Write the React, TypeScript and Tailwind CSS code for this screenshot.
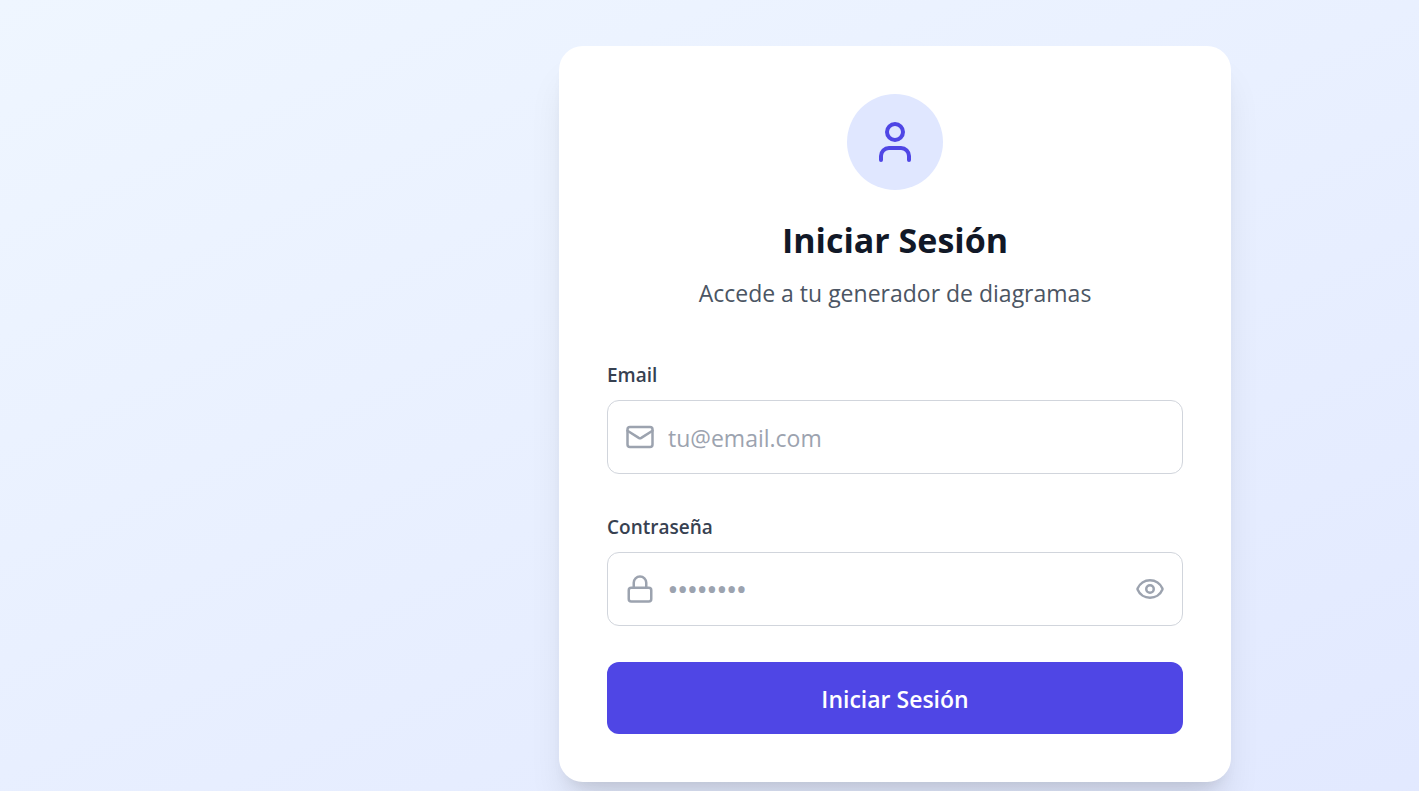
import { useState, type FormEvent } from "react";
import { Eye, EyeOff, Lock, Mail, User } from "lucide-react";

const inputClass =
  "h-[74px] w-full rounded-xl border border-gray-300 bg-white pl-[60px] pt-0.5 text-[23px] leading-9 text-[#111827] outline-none placeholder:text-[#9ca3af] focus:border-[#6366f1]";
const labelClass = "mb-2 block text-[19px] font-semibold leading-[34px] text-[#374151]";
const iconClass = "pointer-events-none absolute left-[18px] top-[22px] text-[#9ca3af]";

export default function App() {
  const [visible, setVisible] = useState(false);
  const handleSubmit = (event: FormEvent) => event.preventDefault();

  return (
    <main className="min-h-screen bg-[linear-gradient(155deg,#eff6ff,#e0e7ff_114%)] pl-[371px] pt-[46px] font-['Segoe_UI','Open_Sans',sans-serif]">
      <section className="mx-auto w-full max-w-2xl rounded-3xl bg-white p-12 shadow-[0_30px_38px_-8px_rgba(0,0,0,0.1),0_12px_15px_-9px_rgba(0,0,0,0.1)]">
        <header className="mb-[46px] text-center">
          <div className="mx-auto mb-6 flex size-24 items-center justify-center rounded-full bg-[#e0e7ff]">
            <User size={48} className="text-[#4f46e5]" aria-hidden="true" />
          </div>
          <h1 className="mb-2 text-[34px] font-bold leading-[52px] text-[#111827]">Iniciar Sesión</h1>
          <p className="text-[23px] leading-[38px] text-[#4b5563]">Accede a tu generador de diagramas</p>
        </header>

        <form onSubmit={handleSubmit} className="flex flex-col gap-9">
          <div>
            <label htmlFor="email" className={labelClass}>Email</label>
            <div className="relative">
              <Mail size={30} className={iconClass} aria-hidden="true" />
              <input id="email" type="email" placeholder="tu@email.com" className={`${inputClass} pr-[18px]`} />
            </div>
          </div>

          <div>
            <label htmlFor="password" className={labelClass}>Contraseña</label>
            <div className="relative">
              <Lock size={30} className={iconClass} aria-hidden="true" />
              <input
                id="password"
                type={visible ? "text" : "password"}
                placeholder="••••••••"
                className={`${inputClass} pr-[72px] placeholder:text-[26px] placeholder:font-semibold`}
              />
              <button
                type="button"
                onClick={() => setVisible(!visible)}
                aria-label={visible ? "Ocultar contraseña" : "Mostrar contraseña"}
                className="absolute right-[18px] top-[22px] text-[#9ca3af]"
              >
                {visible ? <EyeOff size={30} /> : <Eye size={30} />}
              </button>
            </div>
          </div>

          <button
            type="submit"
            className="h-[72px] w-full rounded-xl bg-[#4f46e5] pt-0.5 text-[23px] font-semibold leading-9 text-white hover:bg-[#4338ca]"
          >
            Iniciar Sesión
          </button>
        </form>
      </section>
    </main>
  );
}
